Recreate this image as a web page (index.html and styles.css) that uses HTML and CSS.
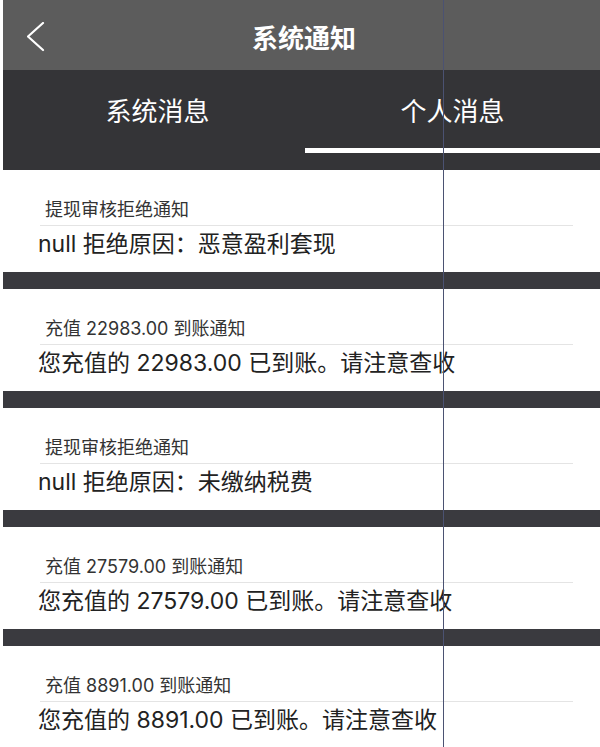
FILE: index.html
```html
<!DOCTYPE html>
<html lang="zh-CN">
<head>
<meta charset="utf-8">
<title>系统通知</title>
<link rel="stylesheet" href="styles.css">
</head>
<body>
<div class="app">
  <header class="topbar">
    <div class="back">
      <svg width="18" height="30" viewBox="0 0 18 30"><polyline points="16,1 1,14.5 16,28" fill="none" stroke="#ffffff" stroke-width="2.2" stroke-linecap="round" stroke-linejoin="round"/></svg>
    </div>
    <h1 class="title">系统通知</h1>
    <div></div>
  </header>
  <nav class="tabs">
    <div class="tab"><span class="tab-text">系统消息</span><span class="indicator"></span></div>
    <div class="tab active"><span class="tab-text">个人消息</span><span class="indicator"></span></div>
  </nav>
  <main class="list">
    <section class="item">
      <div class="item-title">提现审核拒绝通知</div>
      <div class="sep"></div>
      <div class="item-body">null 拒绝原因：恶意盈利套现</div>
    </section>
    <div class="band"></div>
    <section class="item">
      <div class="item-title">充值 22983.00 到账通知</div>
      <div class="sep"></div>
      <div class="item-body">您充值的 22983.00 已到账。请注意查收</div>
    </section>
    <div class="band"></div>
    <section class="item">
      <div class="item-title">提现审核拒绝通知</div>
      <div class="sep"></div>
      <div class="item-body">null 拒绝原因：未缴纳税费</div>
    </section>
    <div class="band"></div>
    <section class="item">
      <div class="item-title">充值 27579.00 到账通知</div>
      <div class="sep"></div>
      <div class="item-body">您充值的 27579.00 已到账。请注意查收</div>
    </section>
    <div class="band"></div>
    <section class="item">
      <div class="item-title">充值 8891.00 到账通知</div>
      <div class="sep"></div>
      <div class="item-body">您充值的 8891.00 已到账。请注意查收</div>
    </section>
  </main>
</div>
<div class="scanline"></div>
</body>
</html>
```

FILE: styles.css
```css
html, body {
  margin: 0;
  padding: 0;
  background: #ffffff;
  height: 747px;
  overflow: hidden;
}
body {
  font-family: "Inter", "Noto Sans CJK SC", "Noto Sans", sans-serif;
  position: relative;
}
.app {
  margin-left: 3px;
  width: 597px;
}
.topbar {
  height: 70px;
  background: #5c5c5c;
  display: grid;
  grid-template-columns: 1fr auto 1fr;
  align-items: center;
}
.back {
  padding-left: 24px;
  padding-top: 2px;
  display: flex;
  align-items: center;
}
.back svg {
  display: block;
}
.title {
  margin: 0;
  padding-top: 2px;
  padding-left: 5px;
  color: #ffffff;
  font-family: "Noto Sans CJK SC", sans-serif;
  font-size: 26px;
  font-weight: 700;
  line-height: 70px;
}
.tabs {
  height: 100px;
  background: #343437;
  display: flex;
  padding-left: 7px;
  box-sizing: border-box;
}
.tab {
  flex: 1;
  display: flex;
  flex-direction: column;
  align-items: center;
  padding-top: 23px;
}
.tab-text {
  color: #ffffff;
  font-family: "Noto Sans CJK SC", sans-serif;
  font-size: 26px;
  line-height: 34px;
}
.indicator {
  display: block;
  align-self: stretch;
  height: 5px;
  margin-top: 21px;
  background: transparent;
}
.tab.active .indicator {
  background: #ffffff;
}
.list {
  display: flex;
  flex-direction: column;
}
.item {
  height: 102px;
  box-sizing: border-box;
  padding-top: 30px;
  background: #ffffff;
}
.item-title {
  padding-left: 42px;
  font-size: 18px;
  line-height: 20px;
  color: #333333;
}
.sep {
  height: 1px;
  margin: 5px 27px 3px 37px;
  background: #e4e4e4;
}
.item-body {
  padding-left: 35px;
  font-size: 23px;
  line-height: 30px;
  color: #222222;
}
.band {
  height: 17px;
  background: #3a3a3f;
}
.scanline {
  position: absolute;
  top: 0;
  left: 443px;
  width: 1px;
  height: 747px;
  background: #4b5272;
}
```
